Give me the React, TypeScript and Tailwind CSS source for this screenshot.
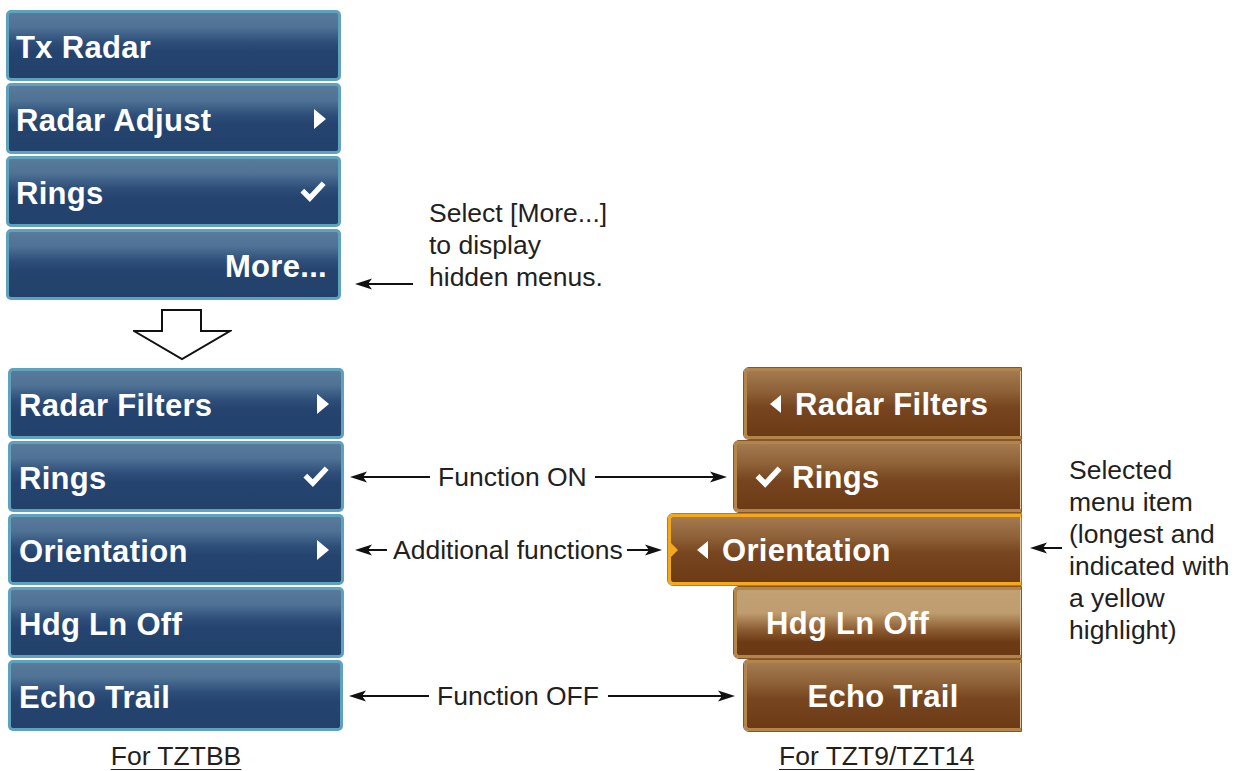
import React from 'react';

const font = { fontFamily: '"Liberation Sans", Arial, Helvetica, sans-serif' };

function Arrow({ w, left = false }: { w: number; left?: boolean }) {
  return (
    <svg width={w} height={14} viewBox={`0 0 ${w} 14`} className="shrink-0 block">
      {left ? (
        <>
          <line x1={12} y1={7} x2={w} y2={7} stroke="#111" strokeWidth={2} />
          <polygon points="0,7 17,1.5 13,7 17,12.5" fill="#111" />
        </>
      ) : (
        <>
          <line x1={0} y1={7} x2={w - 12} y2={7} stroke="#111" strokeWidth={2} />
          <polygon points={`${w},7 ${w - 17},1.5 ${w - 13},7 ${w - 17},12.5`} fill="#111" />
        </>
      )}
    </svg>
  );
}

function TriRight() {
  return (
    <svg width="14" height="22" viewBox="0 0 14 22" className="shrink-0">
      <polygon points="1,1 13,11 1,21" fill="#fff" />
    </svg>
  );
}

function TriLeft() {
  return (
    <svg width="13" height="20" viewBox="0 0 13 20" className="shrink-0">
      <polygon points="12,1 1,10 12,19" fill="#fff" />
    </svg>
  );
}

function Check({ w = 28 }: { w?: number }) {
  return (
    <svg width={w} height={w * 0.8} viewBox="0 0 26 21" className="shrink-0">
      <polyline points="3,10 10,17 23,3" fill="none" stroke="#fff" strokeWidth={5} strokeLinejoin="miter" />
    </svg>
  );
}

const blueBg =
  'bg-[linear-gradient(to_bottom,#587a9b_0%,#4f7295_22%,#2d4e79_45%,#24446f_60%,#22426c_100%)]';

function BlueItem({
  label,
  icon,
  pl = 'pl-[7px]',
  right = false,
}: {
  label: string;
  icon?: 'tri' | 'check';
  pl?: string;
  right?: boolean;
}) {
  return (
    <div
      className={`h-[71px] rounded-[5px] border-[3px] border-[#5ea2bd] ${blueBg} flex items-center ${pl} pr-[11px] ${
        right ? 'justify-end' : 'justify-between'
      }`}
    >
      <span className="text-white font-bold text-[31px] leading-none pt-[3px] tracking-[0.3px]">{label}</span>
      {icon === 'tri' && <TriRight />}
      {icon === 'check' && <Check />}
    </div>
  );
}

const brownBg =
  'bg-[linear-gradient(to_bottom,#a47a50_0%,#8f6238_30%,#774620_55%,#6c3b16_100%)]';
const brownLight =
  'bg-[linear-gradient(to_bottom,#c1a072_0%,#bf9d70_35%,#8a5a30_62%,#6c3b16_80%,#6b3a15_100%)]';

function BrownItem({
  w,
  children,
  light = false,
  selected = false,
  className = '',
}: {
  w: number;
  children: React.ReactNode;
  light?: boolean;
  selected?: boolean;
  className?: string;
}) {
  return (
    <div
      style={{ width: w }}
      className={`relative h-[71px] shrink-0 rounded-l-[5px] border-[3px] border-r-0 outline outline-1 ${
        selected ? 'border-[#f6a81c] outline-[#b87a1c]' : 'border-[#b4854b] outline-[#84562a]'
      } ${light ? brownLight : brownBg} flex items-center ${className}`}
    >
      {selected && (
        <svg width="8" height="14" viewBox="0 0 8 14" className="absolute left-0 top-1/2 -translate-y-1/2">
          <polygon points="0,0 7,7 0,14" fill="#f6a81c" />
        </svg>
      )}
      {children}
      <div className="absolute right-0 top-0 bottom-0 w-[1px] bg-[#e0c9a4]" />
    </div>
  );
}

const brownText = 'text-white font-bold text-[31px] leading-none pt-[2px] tracking-[0.3px]';
const note = 'text-[#231f20] text-[26.5px] leading-[32px] whitespace-nowrap';

export default function App() {
  return (
    <div className="w-[1241px] h-[771px] bg-white overflow-hidden" style={font}>
      {/* Top menu */}
      <div className="flex pt-[10px] pl-[6px]">
        <div className="w-[335px] flex flex-col gap-[2px]">
          <BlueItem label="Tx Radar" />
          <BlueItem label="Radar Adjust" icon="tri" />
          <BlueItem label="Rings" icon="check" />
          <BlueItem label="More..." right />
        </div>
        <div className="ml-[14px] mt-[187px] flex">
          <div className="self-end mb-[9px]">
            <Arrow w={58} left />
          </div>
          <p className={`ml-[16px] ${note}`}>
            Select [More...]
            <br />
            to display
            <br />
            hidden menus.
          </p>
        </div>
      </div>

      {/* Hollow arrow */}
      <div className="mt-[9px] ml-[133px]">
        <svg width="99" height="52" viewBox="0 0 99 52" className="block">
          <polygon points="29,1 68,1 68,22 97,22 49,50 1,22 29,22" fill="#fff" stroke="#111" strokeWidth="2" />
        </svg>
      </div>

      {/* Bottom menus */}
      <div className="flex mt-[7px] pl-[8px]">
        <div className="flex flex-col gap-[2px] w-[1013px]">
          <div className="flex items-center">
            <div className="w-[336px]">
              <BlueItem label="Radar Filters" icon="tri" pl="pl-[8px]" />
            </div>
            <div className="flex-1" />
            <BrownItem w={277}>
              <div className="ml-[22px] flex items-center gap-[13px]">
                <TriLeft />
                <span className={brownText}>Radar Filters</span>
              </div>
            </BrownItem>
          </div>

          <div className="flex items-center">
            <div className="w-[336px]">
              <BlueItem label="Rings" icon="check" pl="pl-[8px]" />
            </div>
            <div className="flex-1 flex items-center pl-[6px] pr-[7px]">
              <Arrow w={80} left />
              <span className={`ml-[8px] ${note}`}>Function ON</span>
              <div className="flex-1 ml-[7px] flex justify-end">
                <Arrow w={132} />
              </div>
            </div>
            <BrownItem w={287}>
              <div className="ml-[17px] flex items-center gap-[9px]">
                <Check w={29} />
                <span className={brownText}>Rings</span>
              </div>
            </BrownItem>
          </div>

          <div className="flex items-center">
            <div className="w-[336px]">
              <BlueItem label="Orientation" icon="tri" pl="pl-[8px]" />
            </div>
            <div className="flex-1 flex items-center pl-[11px] pr-[6px]">
              <Arrow w={32} left />
              <span className={`ml-[6px] ${note}`}>Additional functions</span>
              <div className="flex-1 ml-[4px] flex justify-end">
                <Arrow w={35} />
              </div>
            </div>
            <BrownItem w={353} selected>
              <div className="ml-[25px] flex items-center gap-[13px]">
                <TriLeft />
                <span className={brownText}>Orientation</span>
              </div>
            </BrownItem>
          </div>

          <div className="flex items-center">
            <div className="w-[336px]">
              <BlueItem label="Hdg Ln Off" pl="pl-[8px]" />
            </div>
            <div className="flex-1" />
            <BrownItem w={287} light>
              <span className={`ml-[29px] ${brownText}`}>Hdg Ln Off</span>
            </BrownItem>
          </div>

          <div className="flex items-center">
            <div className="w-[336px]">
              <BlueItem label="Echo Trail" pl="pl-[8px]" />
            </div>
            <div className="flex-1 flex items-center pl-[6px] pr-[9px]">
              <Arrow w={80} left />
              <span className={`ml-[8px] ${note}`}>Function OFF</span>
              <div className="flex-1 ml-[9px] flex justify-end">
                <Arrow w={127} />
              </div>
            </div>
            <BrownItem w={277} className="justify-center">
              <span className={`${brownText} ml-[-2px]`}>Echo Trail</span>
            </BrownItem>
          </div>
        </div>

        {/* Right note */}
        <div className="flex items-center ml-[9px]">
          <div className="self-center mt-[-4px]">
            <Arrow w={32} left />
          </div>
          <p className={`ml-[7px] ${note}`}>
            Selected
            <br />
            menu item
            <br />
            (longest and
            <br />
            indicated with
            <br />
            a yellow
            <br />
            highlight)
          </p>
        </div>
      </div>

      {/* Captions */}
      <div className="flex pl-[8px] mt-[9px]">
        <div className="w-[336px] text-center">
          <span className={`${note} underline underline-offset-[4px] decoration-1`}>For TZTBB</span>
        </div>
        <div className="ml-[435px]">
          <span className={`${note} underline underline-offset-[4px] decoration-1`}>For TZT9/TZT14</span>
        </div>
      </div>
    </div>
  );
}
